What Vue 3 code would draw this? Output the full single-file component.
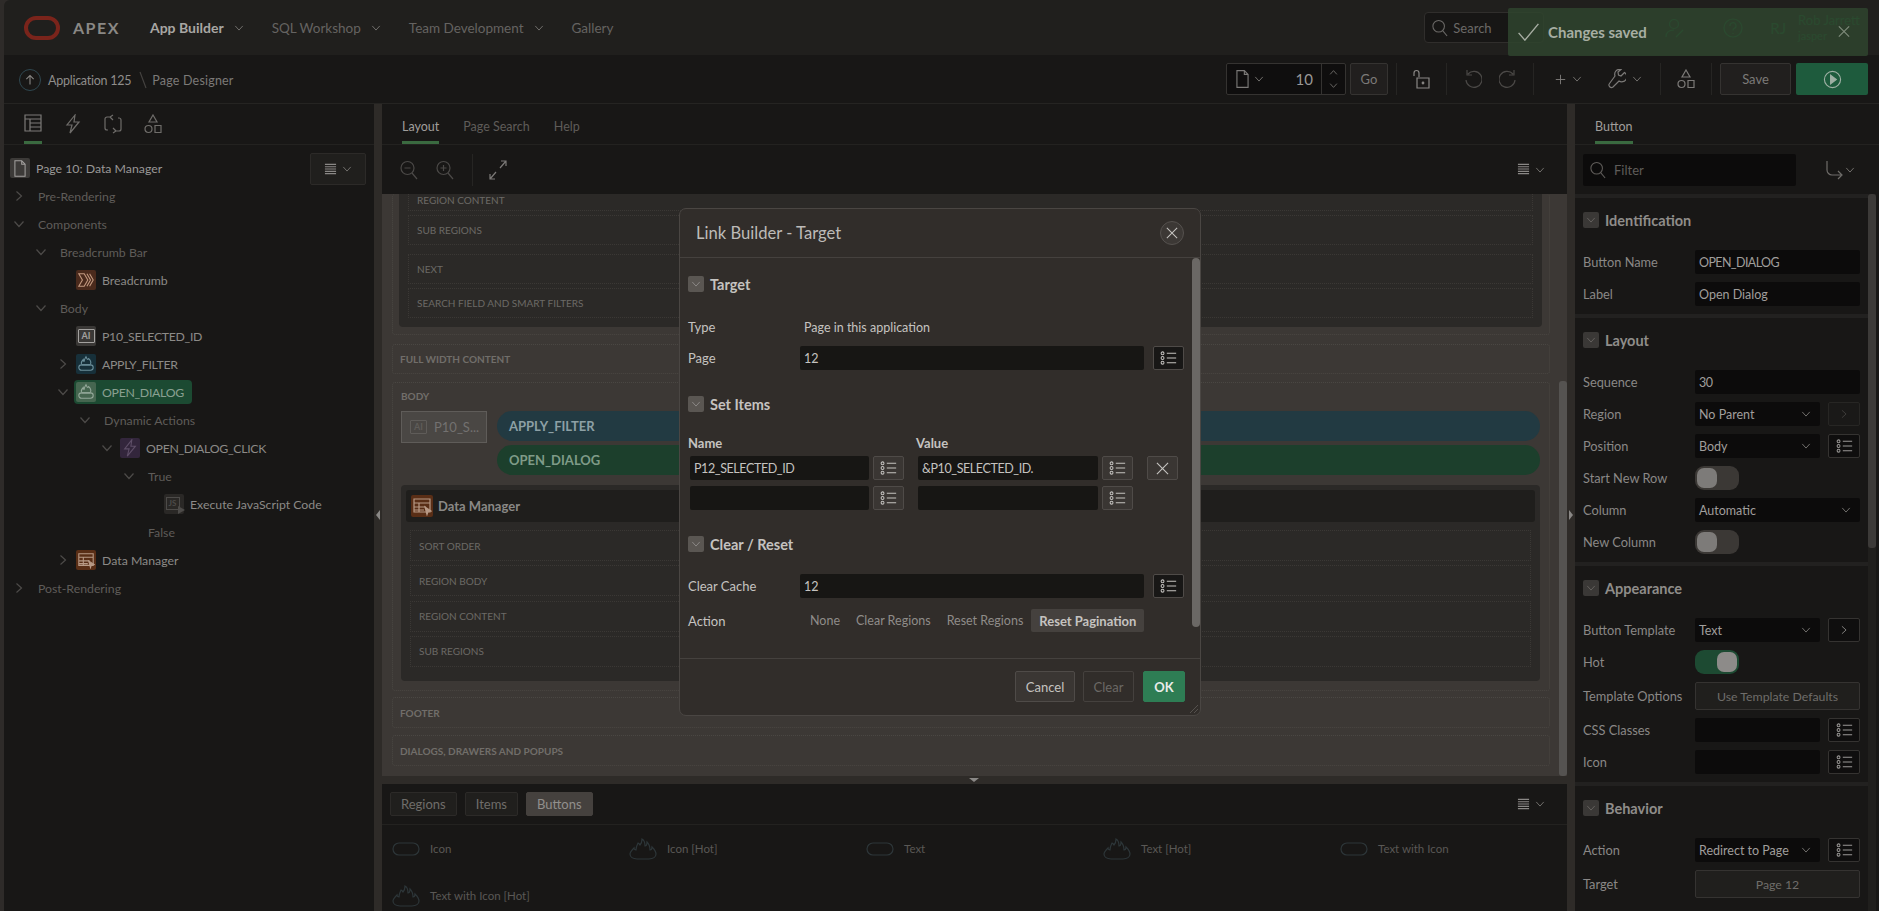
<template>
  <div class="app">
    <svg class="defs" aria-hidden="true">
      <symbol id="chev-d" viewBox="0 0 12 12"><path d="M1.5 3.5 6 8.5l4.5-5" /></symbol>
      <symbol id="chev-r" viewBox="0 0 12 12"><path d="M3.5 1.5 8.5 6l-5 4.5" /></symbol>
      <symbol id="chev-u" viewBox="0 0 12 12"><path d="M1.5 8.5 6 3.5l4.5 5" /></symbol>
      <symbol id="menu" viewBox="0 0 14 14"><path d="M1 1.5h12M1 4h12M1 6.5h12M1 9h12M1 11.5h12" /></symbol>
      <symbol id="lov" viewBox="0 0 20 16"><circle cx="3" cy="2.5" r="1.7" /><circle cx="3" cy="8" r="1.7" /><circle cx="3" cy="13.5" r="1.7" /><path d="M8 2.5h11M8 8h11M8 13.5h11" /></symbol>
      <symbol id="search" viewBox="0 0 18 20"><circle cx="7.5" cy="8" r="6.5" /><path d="m12 13 5 6" /></symbol>
      <symbol id="page" viewBox="0 0 14 20"><path d="M1 1h8l4 4v14H1zM9 1v4h4" /></symbol>
      <symbol id="tbl" viewBox="0 0 18 18"><path d="M1 1h16v16H1zM1 5h16M6 5v12M6 9h11M6 13h11" /></symbol>
      <symbol id="bolt" viewBox="0 0 14 20"><path d="M9 1 1 11h5l-2 8 9-11H8z" /></symbol>
      <symbol id="shared" viewBox="0 0 18 20"><path d="M7 3H3a2 2 0 0 0-2 2v9a2 2 0 0 0 2 2h1M11 17h4a2 2 0 0 0 2-2V6a2 2 0 0 0-2-2h-1M9 1 6 3l3 3M9 14l3 3-3 2" /></symbol>
      <symbol id="shapes" viewBox="0 0 18 20"><path d="M9 1l4 7H5z" /><circle cx="4.5" cy="15" r="3.5" /><path d="M11 11.5h6v7h-6z" /></symbol>
      <symbol id="lock" viewBox="0 0 18 20"><path d="M1 7V4a2.500 2.500 0 0 1 5 0v4" /><path d="M4 9h12v10H4z" /><circle cx="10" cy="14" r=".8" /></symbol>
      <symbol id="undo" viewBox="0 0 18 20"><path d="M4 5a8 8 0 1 1-2 6M3 1v5h5" /></symbol>
      <symbol id="redo" viewBox="0 0 18 20"><path d="M14 5a8 8 0 1 0 2 6M15 1v5h-5" /></symbol>
      <symbol id="plus" viewBox="0 0 14 14"><path d="M7 1v12M1 7h12" /></symbol>
      <symbol id="wrench" viewBox="0 0 18 20"><path d="M16.500 3.500 13 7l-2.500-1L10 3l3-2.500a5 5 0 0 0-6 6.500L1.500 14.500a2.500 2.500 0 0 0 3.500 3.500L11 12a5 5 0 0 0 5.500-8.500z" /></symbol>
      <symbol id="play" viewBox="0 0 20 20"><circle cx="10" cy="10" r="8.500" /><path class="solid" d="M8 5.500 14 10l-6 4.500z" /></symbol>
      <symbol id="check" viewBox="0 0 24 20"><path d="M1 11l7 8L23 1" /></symbol>
      <symbol id="x" viewBox="0 0 14 14"><path d="M1 1l12 12M13 1 1 13" /></symbol>
      <symbol id="expand" viewBox="0 0 18 20"><path d="M17 1l-6 7M12 1h5v5M1 19l6-7M6 19H1v-5" /></symbol>
      <symbol id="zoom-out" viewBox="0 0 18 20"><circle cx="7.500" cy="8" r="6.500" /><path d="m12 13 5 6M4.500 8h6" /></symbol>
      <symbol id="zoom-in" viewBox="0 0 18 20"><circle cx="7.500" cy="8" r="6.500" /><path d="m12 13 5 6M4.500 8h6M7.500 5v6" /></symbol>
      <symbol id="pill" viewBox="0 0 28 14"><rect x="1" y="1" width="26" height="12" rx="6" /></symbol>
      <symbol id="flame" viewBox="0 0 28 22"><path d="M8 21h12c4 0 7-2 7-5 0-3-2-5-4-7 0 2-1 3-2 3 0-3-1-6-3-8 0 3-1 4-2 4 0-3-1-6-3-7 0 3-1 5-2 6-1-1-1-2-2-2-1 2-2 4-2 7-1 0-2-1-2-2-2 2-4 4-4 6 0 3 3 5 7 5z" /></symbol>
      <symbol id="btn-ico" viewBox="0 0 20 20"><path d="M5 10c-1-2 0-3 2-5 0 1 0 2 1 2 0-2 1-3 2-5 1 2 1 3 2 3l1-1c2 2 3 4 2 6M5 11h10" /><rect x="2" y="11" width="16" height="6" rx="3" /></symbol>
      <symbol id="crumb" viewBox="0 0 20 20"><path d="M2 3h6l4 7-4 7H2l4-7zM11 3l4 7-4 7M14 3l4 7-4 7" /></symbol>
      <symbol id="dtable" viewBox="0 0 20 20"><path d="M2 3h16v13H2zM2 7h16M2 11h12M2 14h10M7 7v9" /><path class="solid" d="m13 11 6 4-3 .5-1 3z" /></symbol>
      <symbol id="goto" viewBox="0 0 18 20"><path d="M2 1v9a5 5 0 0 0 5 5h9M13 11l4 4-4 4" /></symbol>
      <symbol id="user" viewBox="0 0 20 20"><circle cx="9" cy="6" r="4.500" /><path d="M1 19c0-5 3-7 8-7M11 19l7-7" /></symbol>
      <symbol id="help" viewBox="0 0 20 20"><circle cx="10" cy="10" r="9" /><path d="M7 8a3 3 0 1 1 4 2.500c-1 .5-1 1-1 2M10 15v1" /></symbol>
    </svg>

    <header class="topbar">
      <div class="logo"></div>
      <span class="brand">APEX</span>
      <nav class="nav">
        <span v-for="item in navItems" :key="item.label" class="nav-item" :class="{ on: item.on }">
          {{ item.label }}
          <svg v-if="item.menu" class="i chev"><use href="#chev-d" /></svg>
        </span>
      </nav>
      <div class="top-right">
        <div class="top-search">
          <svg class="i s16"><use href="#search" /></svg>
          <span>Search</span>
        </div>
        <svg class="i ghost-ico"><use href="#user" /></svg>
        <svg class="i ghost-ico help"><use href="#help" /></svg>
        <span class="ghost-init">RJ</span>
        <div class="ghost-user">
          <span>Rob Jarrett</span>
          <span>jasper</span>
        </div>
      </div>
    </header>

    <div class="toolbar">
      <div class="crumbs">
        <span class="up-btn"><svg viewBox="0 0 22 22" class="i up-ico"><path d="M11 16V6M7 10l4-4 4 4" /></svg></span>
        <span class="crumb-a">Application 125</span>
        <svg viewBox="0 0 8 18" class="i slash"><path d="M1 1l6 16" /></svg>
        <span class="crumb-b">Page Designer</span>
      </div>
      <div class="tools">
        <div class="page-sel">
          <svg class="i page-ico"><use href="#page" /></svg>
          <svg class="i chev"><use href="#chev-d" /></svg>
          <span class="page-num">10</span>
          <span class="spin">
            <svg class="i spin-ico"><use href="#chev-u" /></svg>
            <svg class="i spin-ico"><use href="#chev-d" /></svg>
          </span>
        </div>
        <span class="tbtn go">Go</span>
        <span class="vsep first"></span>
        <span class="tgroup lock-g"><svg class="i t18 lock-ico"><use href="#lock" /></svg></span>
        <span class="vsep"></span>
        <span class="tgroup undo-g">
          <svg class="i t18 faint"><use href="#undo" /></svg>
          <svg class="i t18 faint"><use href="#redo" /></svg>
        </span>
        <span class="vsep"></span>
        <span class="tgroup add-g">
          <svg class="i plus-ico"><use href="#plus" /></svg>
          <svg class="i chev"><use href="#chev-d" /></svg>
          <svg class="i t18 wrench"><use href="#wrench" /></svg>
          <svg class="i chev"><use href="#chev-d" /></svg>
        </span>
        <span class="vsep"></span>
        <span class="tgroup shape-g"><svg class="i t18"><use href="#shapes" /></svg></span>
        <span class="vsep"></span>
        <span class="tbtn save">Save</span>
        <span class="run"><svg class="i s18"><use href="#play" /></svg></span>
      </div>
    </div>

    <main class="main">
      <aside class="lpanel">
        <div class="ltabs">
          <span v-for="(t, i) in leftTabs" :key="t" class="ltab" :class="{ on: i === 0 }">
            <svg class="i t18"><use :href="'#' + t" /></svg>
          </span>
        </div>
        <div class="tree-head">
          <span class="page-tile"><svg class="i page-small"><use href="#page" /></svg></span>
          <span class="tree-title">Page 10: Data Manager</span>
          <span class="menu-btn">
            <svg class="i s13"><use href="#menu" /></svg>
            <svg class="i chev"><use href="#chev-d" /></svg>
          </span>
        </div>
        <ul class="tree">
          <li v-for="n in treeRows" :key="n.label" class="tree-row" :style="{ paddingLeft: 9 + n.level * 22 + 'px' }">
            <svg v-if="n.open !== undefined" class="i toggle"><use :href="n.open ? '#chev-d' : '#chev-r'" /></svg>
            <span v-else class="toggle"></span>
            <span v-if="n.icon" class="node" :class="{ sel: n.sel }">
              <span class="tile" :class="n.tile">
                <span v-if="n.icon === 'ai'" class="ai">AI</span>
                <span v-else-if="n.icon === 'js'" class="js">JS<i></i></span>
                <svg v-else class="i tile-ico"><use :href="'#' + n.icon" /></svg>
              </span>
              <span class="node-label" :class="{ caps: isCaps(n.label) }">{{ n.label }}</span>
            </span>
            <span v-else class="group-label">{{ n.label }}</span>
          </li>
        </ul>
      </aside>

      <div class="splitter"><span class="tri left"></span></div>

      <section class="center">
        <div class="ptabs">
          <span v-for="(t, i) in centerTabs" :key="t" class="ptab" :class="{ on: i === 0 }">{{ t }}</span>
        </div>
        <div class="zoombar">
          <svg class="i t18 dim"><use href="#zoom-out" /></svg>
          <svg class="i t18 dim"><use href="#zoom-in" /></svg>
          <span class="zsep"></span>
          <svg class="i t18 bright"><use href="#expand" /></svg>
          <span class="zmenu">
            <svg class="i s13"><use href="#menu" /></svg>
            <svg class="i chev"><use href="#chev-d" /></svg>
          </span>
        </div>
        <div class="canvas">
          <div class="scroll">
            <div class="pos top-pos">
              <div class="region-box">
                <div class="slot cut">REGION CONTENT</div>
                <div v-for="r in topRows" :key="r" class="slot" :class="{ spaced: r === 'NEXT' }">{{ r }}</div>
              </div>
            </div>
            <div class="pos label-only">FULL WIDTH CONTENT</div>
            <div class="pos body-pos">
              <div class="pos-label">BODY</div>
              <div class="body-items">
                <div class="cv-item"><span class="ai cv-ai">AI</span><span>P10_S...</span></div>
                <div class="pills">
                  <div class="pill teal">APPLY_FILTER</div>
                  <div class="pill green">OPEN_DIALOG</div>
                </div>
              </div>
              <div class="region-box dm">
                <div class="dm-head">
                  <span class="dm-tile"><svg class="i dm-ico"><use href="#dtable" /></svg></span>
                  <span>Data Manager</span>
                </div>
                <div class="dm-slots">
                  <div v-for="r in dmRows" :key="r" class="slot">{{ r }}</div>
                </div>
              </div>
            </div>
            <div class="pos label-only footer-pos">FOOTER</div>
            <div class="pos label-only dialog-pos">DIALOGS, DRAWERS AND POPUPS</div>
          </div>
          <div class="track"><div class="thumb"></div></div>
        </div>
        <div class="hsplit"><span class="tri down"></span></div>
        <div class="gallery">
          <div class="gtabs">
            <span v-for="(t, i) in galleryTabs" :key="t" class="gtab" :class="{ on: i === 2 }">{{ t }}</span>
            <span class="zmenu">
              <svg class="i s13"><use href="#menu" /></svg>
              <svg class="i chev"><use href="#chev-d" /></svg>
            </span>
          </div>
          <div class="gitems">
            <div v-for="g in galleryItems" :key="g.label" class="gitem">
              <span class="gico">
                <svg class="i" :class="g.hot ? 'flame' : 'gpill'"><use :href="g.hot ? '#flame' : '#pill'" /></svg>
              </span>
              <span>{{ g.label }}</span>
            </div>
          </div>
        </div>
      </section>

      <div class="splitter"><span class="tri right"></span></div>

      <aside class="rpanel">
        <div class="ptabs"><span class="ptab on rtab">Button</span></div>
        <div class="filter-row">
          <div class="filter">
            <svg class="i s16"><use href="#search" /></svg>
            <span>Filter</span>
          </div>
          <span class="goto">
            <svg class="i t18"><use href="#goto" /></svg>
            <svg class="i chev"><use href="#chev-d" /></svg>
          </span>
        </div>
        <div class="props">
          <div class="prop-groups">
            <section v-for="g in propGroups" :key="g.title" class="pgroup">
              <h3 class="phead">
                <span class="cbox"><svg class="i cbox-ico"><use href="#chev-d" /></svg></span>
                {{ g.title }}
              </h3>
              <div class="pfields">
                <div v-for="f in g.fields" :key="f.label" class="pfield">
                  <span class="plabel">{{ f.label }}</span>
                  <div class="pctrl">
                    <span v-if="f.kind === 'toggle'" class="toggle-sw" :class="{ on: f.on }"><i></i></span>
                    <span v-else-if="f.kind === 'button'" class="pbutton">{{ f.value }}</span>
                    <span v-else class="pinput">
                      <span :class="{ caps: isCaps(f.value) }">{{ f.value }}</span>
                      <svg v-if="f.kind === 'select'" class="i chev"><use href="#chev-d" /></svg>
                    </span>
                    <span v-if="f.side" class="pside" :class="{ off: f.side === 'off' }">
                      <svg v-if="f.side === 'lov'" class="i lov-ico"><use href="#lov" /></svg>
                      <svg v-else class="i chev"><use href="#chev-r" /></svg>
                    </span>
                  </div>
                </div>
              </div>
            </section>
          </div>
          <div class="ptrack"><div class="pthumb"></div></div>
        </div>
      </aside>
    </main>

    <div class="toast">
      <svg class="i check"><use href="#check" /></svg>
      <span>Changes saved</span>
      <svg class="i toast-x"><use href="#x" /></svg>
    </div>

    <div class="modal">
      <div class="m-head">
        <span>Link Builder - Target</span>
        <span class="m-close"><svg class="i s13"><use href="#x" /></svg></span>
      </div>
      <div class="m-body">
        <div class="m-content">
          <h3 class="m-sec">
            <span class="cbox"><svg class="i cbox-ico"><use href="#chev-d" /></svg></span>
            Target
          </h3>
          <div class="m-row type-row">
            <span class="m-label">Type</span>
            <span class="m-static">Page in this application</span>
          </div>
          <div class="m-row">
            <span class="m-label">Page</span>
            <span class="m-input wide">12</span>
            <span class="m-lov dark"><svg class="i lov-ico"><use href="#lov" /></svg></span>
          </div>

          <h3 class="m-sec next">
            <span class="cbox"><svg class="i cbox-ico"><use href="#chev-d" /></svg></span>
            Set Items
          </h3>
          <div class="item-heads"><b>Name</b><b>Value</b></div>
          <div v-for="(r, i) in setItems" :key="i" class="item-row">
            <span class="m-input name">{{ r.name }}</span>
            <span class="m-lov"><svg class="i lov-ico"><use href="#lov" /></svg></span>
            <span class="m-input value">{{ r.value }}</span>
            <span class="m-lov"><svg class="i lov-ico"><use href="#lov" /></svg></span>
            <span v-if="r.name" class="m-lov del"><svg class="i s13"><use href="#x" /></svg></span>
          </div>

          <h3 class="m-sec next">
            <span class="cbox"><svg class="i cbox-ico"><use href="#chev-d" /></svg></span>
            Clear / Reset
          </h3>
          <div class="m-row cache-row">
            <span class="m-label">Clear Cache</span>
            <span class="m-input wide">12</span>
            <span class="m-lov dark"><svg class="i lov-ico"><use href="#lov" /></svg></span>
          </div>
          <div class="m-row action-row">
            <span class="m-label">Action</span>
            <div class="options">
              <span v-for="(o, i) in actionOptions" :key="o" class="option" :class="{ on: i === 3 }">{{ o }}</span>
            </div>
          </div>
        </div>
        <div class="m-scroll"></div>
      </div>
      <div class="m-foot">
        <span class="m-btn">Cancel</span>
        <span class="m-btn muted">Clear</span>
        <span class="m-btn ok">OK</span>
      </div>
      <svg viewBox="0 0 8 8" class="grip"><path d="M0 8l8-8M4 8l4-4" /></svg>
    </div>
  </div>
</template>

<script setup>
const navItems = [
  { label: 'App Builder', menu: true, on: true },
  { label: 'SQL Workshop', menu: true },
  { label: 'Team Development', menu: true },
  { label: 'Gallery' }
]

const leftTabs = ['tbl', 'bolt', 'shared', 'shapes']
const centerTabs = ['Layout', 'Page Search', 'Help']
const galleryTabs = ['Regions', 'Items', 'Buttons']

// level drives the indent, open is undefined for rows with no toggle
const treeRows = [
  { label: 'Pre-Rendering', level: 0, open: false },
  { label: 'Components', level: 0, open: true },
  { label: 'Breadcrumb Bar', level: 1, open: true },
  { label: 'Breadcrumb', level: 2, icon: 'crumb', tile: 'rust' },
  { label: 'Body', level: 1, open: true },
  { label: 'P10_SELECTED_ID', level: 2, icon: 'ai', tile: 'grey' },
  { label: 'APPLY_FILTER', level: 2, open: false, icon: 'btn-ico', tile: 'teal' },
  { label: 'OPEN_DIALOG', level: 2, open: true, icon: 'btn-ico', tile: 'sage', sel: true },
  { label: 'Dynamic Actions', level: 3, open: true },
  { label: 'OPEN_DIALOG_CLICK', level: 4, open: true, icon: 'bolt', tile: 'purple' },
  { label: 'True', level: 5, open: true },
  { label: 'Execute JavaScript Code', level: 6, icon: 'js', tile: 'dark' },
  { label: 'False', level: 5 },
  { label: 'Data Manager', level: 2, open: false, icon: 'dtable', tile: 'orange' },
  { label: 'Post-Rendering', level: 0, open: false }
]

const topRows = ['SUB REGIONS', 'NEXT', 'SEARCH FIELD AND SMART FILTERS']
const dmRows = ['SORT ORDER', 'REGION BODY', 'REGION CONTENT', 'SUB REGIONS']

const galleryItems = [
  { label: 'Icon' },
  { label: 'Icon [Hot]', hot: true },
  { label: 'Text' },
  { label: 'Text [Hot]', hot: true },
  { label: 'Text with Icon' },
  { label: 'Text with Icon [Hot]', hot: true }
]

const propGroups = [
  {
    title: 'Identification',
    fields: [
      { label: 'Button Name', value: 'OPEN_DIALOG' },
      { label: 'Label', value: 'Open Dialog' }
    ]
  },
  {
    title: 'Layout',
    fields: [
      { label: 'Sequence', value: '30' },
      { label: 'Region', value: 'No Parent', kind: 'select', side: 'off' },
      { label: 'Position', value: 'Body', kind: 'select', side: 'lov' },
      { label: 'Start New Row', kind: 'toggle' },
      { label: 'Column', value: 'Automatic', kind: 'select' },
      { label: 'New Column', kind: 'toggle' }
    ]
  },
  {
    title: 'Appearance',
    fields: [
      { label: 'Button Template', value: 'Text', kind: 'select', side: 'next' },
      { label: 'Hot', kind: 'toggle', on: true },
      { label: 'Template Options', value: 'Use Template Defaults', kind: 'button' },
      { label: 'CSS Classes', value: '', side: 'lov' },
      { label: 'Icon', value: '', side: 'lov' }
    ]
  },
  {
    title: 'Behavior',
    fields: [
      { label: 'Action', value: 'Redirect to Page', kind: 'select', side: 'lov' },
      { label: 'Target', value: 'Page 12', kind: 'button' }
    ]
  }
]

const setItems = [
  { name: 'P12_SELECTED_ID', value: '&P10_SELECTED_ID.' },
  { name: '', value: '' }
]

const actionOptions = ['None', 'Clear Regions', 'Reset Regions', 'Reset Pagination']

// item names in capitals run tighter than the rest of the text
function isCaps(text) {
  return /^[A-Z0-9_]+$/.test(text || '')
}
</script>

<style>
html, body { background: #181716; }
</style>

<style scoped>
* { box-sizing: border-box; }
ul, h3 { margin: 0; padding: 0; list-style: none; font: inherit; }

.defs { position: absolute; width: 0; height: 0; }
.i { display: block; flex: none; fill: none; stroke: currentColor; stroke-width: 1.2; }
.chev { width: 10px; height: 10px; color: #6f6d6a; }
.s13 { width: 13px; height: 13px; }
.s16 { width: 16px; height: 18px; }
.s18 { width: 19px; height: 19px; }
.t18 { width: 18px; height: 20px; }

.app {
  position: relative;
  width: 1879px;
  height: 911px;
  padding-left: 4px;
  overflow: hidden;
  display: flex;
  flex-direction: column;
  background: #2e2b29;
  color: #8a8886;
  font-family: Lato, "Liberation Sans", sans-serif;
  font-size: 13px;
}

/* top header */
.topbar { height: 55px; flex: none; display: flex; align-items: center; background: #201f1d; padding-left: 20px; border-top-left-radius: 6px; }
.logo { width: 36px; height: 24px; border: 4px solid #7a241b; border-radius: 12px; }
.brand { margin-left: 13px; font-size: 16px; font-weight: 700; letter-spacing: 1.5px; color: #8a8885; }
.nav { margin-left: 30px; display: flex; gap: 28px; }
.nav-item { display: flex; align-items: center; gap: 10px; font-size: 13.5px; color: #656361; }
.nav-item.on { color: #a8a6a3; font-weight: 700; font-size: 14px; }
.top-right { margin-left: auto; display: flex; align-items: center; padding-right: 19px; }
.top-search { width: 120px; height: 31px; display: flex; align-items: center; gap: 5px; padding-left: 7px; background: #171615; border: 1px solid #302e2c; border-radius: 4px; color: #6b6967; margin-right: 121px; }
.ghost-ico { width: 20px; height: 20px; color: #0e6a38; }
.ghost-ico.help { margin-left: 38px; }
.ghost-init { margin-left: 27px; font-size: 15px; color: #0e6a38; }
.ghost-user { margin-left: 12px; display: flex; flex-direction: column; color: #0e6a38; line-height: 16px; }
.ghost-user span + span { font-size: 11px; }

/* page toolbar */
.toolbar { height: 49px; flex: none; display: flex; align-items: center; justify-content: space-between; background: #181716; border-bottom: 1px solid #252422; }
.crumbs { display: flex; align-items: center; padding: 2px 0 0 15px; font-size: 12.5px; letter-spacing: -.25px; }
.up-btn { width: 22px; height: 22px; border: 1px solid #2f4750; border-radius: 50%; display: flex; }
.up-ico { width: 20px; height: 20px; color: #8a8886; }
.crumb-a { margin-left: 7px; color: #8f8d8b; }
.slash { width: 8px; height: 18px; margin: 0 5px 0 8px; color: #454341; }
.crumb-b { color: #7c7a78; letter-spacing: .2px; }
.tools { display: flex; align-items: center; padding-right: 11px; }
.page-sel { width: 120px; height: 32px; display: flex; align-items: center; padding-left: 9px; background: #0f0e0e; border: 1px solid #353331; border-radius: 2px; }
.page-ico { width: 13px; height: 20px; color: #7c7a78; margin-right: 5px; }
.page-num { margin-left: auto; font-size: 15px; color: #9a9896; padding-right: 8px; }
.spin { width: 24px; height: 100%; border-left: 1px solid #353331; display: flex; flex-direction: column; align-items: center; justify-content: center; gap: 4px; }
.spin-ico { width: 9px; height: 9px; color: #6f6d6a; }
.tbtn { height: 32px; display: flex; align-items: center; justify-content: center; background: #211f1e; border: 1px solid #353331; border-radius: 2px; color: #7c7a78; }
.go { width: 38px; margin-left: 4px; }
.vsep { width: 1px; height: 32px; background: #262523; }
.vsep.first { margin-left: 8px; }
.tgroup { display: flex; align-items: center; justify-content: center; color: #7c7a78; }
.lock-g { width: 49px; }
.lock-ico { color: #8a8886; }
.undo-g { width: 86px; gap: 17px; }
.faint { color: #4b4947; }
.add-g { width: 126px; justify-content: flex-start; padding-left: 21px; gap: 5px; }
.plus-ico { width: 11px; height: 11px; }
.add-g .chev { margin-left: 1px; }
.wrench { margin-left: 21px; }
.shape-g { width: 50px; }
.save { width: 71px; margin-left: 8px; }
.run { width: 72px; height: 32px; margin-left: 5px; background: #1e5b3d; border-radius: 2px; display: flex; align-items: center; justify-content: center; color: #9dafa3; }
.solid { fill: currentColor; }

/* main layout */
.main { flex: 1; min-height: 0; display: flex; }
.lpanel { width: 370px; flex: none; background: #181716; }
.splitter { width: 8px; flex: none; position: relative; background: #2e2b28; }
.tri { position: absolute; width: 0; height: 0; }
.tri.left { left: 2px; top: 406px; border: 5px solid transparent; border-left: 0; border-right: 4px solid #8a8886; }
.tri.right { left: 2px; top: 406px; border: 5px solid transparent; border-right: 0; border-left: 4px solid #8a8886; }
.tri.down { left: 587px; top: 2px; border: 5px solid transparent; border-bottom: 0; border-top: 4px solid #8a8886; }

/* left tree */
.ltabs { height: 41px; display: flex; gap: 22px; padding-left: 20px; border-bottom: 1px solid #232220; }
.ltab { width: 18px; height: 40px; display: flex; align-items: center; justify-content: center; color: #6f6d6a; }
.ltab.on { border-bottom: 3px solid #3a6a40; color: #7c7a78; }
.tree-head { height: 37px; display: flex; align-items: center; padding: 9px 8px 0 6px; font-size: 12.3px; }
.page-tile { width: 20px; height: 20px; background: #3c3a38; border-radius: 2px; display: flex; align-items: center; justify-content: center; color: #a3a19f; }
.page-small { width: 12px; height: 17px; }
.tree-title { margin-left: 6px; color: #9a9896; }
.menu-btn { margin: 2px 0 0 auto; width: 56px; height: 32px; flex: none; display: flex; align-items: center; justify-content: center; gap: 5px; background: #201f1d; border: 1px solid #2c2a28; border-radius: 2px; color: #8a8886; }
.tree-row { height: 28px; display: flex; align-items: center; color: #5f5c59; font-size: 12.3px; }
.toggle { width: 12px; height: 12px; flex: none; color: #4d4b49; }
.group-label { margin-left: 13px; }
.node { display: flex; align-items: center; margin-left: 5px; padding: 2px 8px 2px 2px; border-radius: 4px; }
.node.sel { background: #1c4a32; }
.tile { width: 20px; height: 20px; border-radius: 2px; display: flex; align-items: center; justify-content: center; }
.tile-ico { width: 18px; height: 18px; }
.node-label { margin-left: 6px; color: #8c8a87; }
.node-label.caps { letter-spacing: -.3px; }
.node.sel .node-label { color: #8aa091; }
.tile.rust { background: #4a2a1c; color: #c49a80; }
.tile.grey { background: #3a3836; color: #a3a19f; }
.tile.teal { background: #17303a; color: #6c8f9b; }
.tile.sage { background: #466650; color: #93a899; }
.tile.purple { background: #33263c; color: #5f4f68; }
.tile.dark { background: #2a2826; color: #4d4b49; }
.tile.orange { background: #592e16; color: #b89a86; }
.ai { border: 1px solid currentColor; font-size: 9px; font-weight: 700; line-height: 12px; width: 17px; height: 14px; text-align: center; border-radius: 1px; }
.js { position: relative; font-size: 8px; font-weight: 700; border: 1px solid currentColor; width: 14px; height: 13px; line-height: 11px; text-align: center; margin: -2px 3px 0 0; }
.js i { position: absolute; right: -6px; bottom: -5px; border: 4px solid transparent; border-right: 0; border-left: 7px solid currentColor; }

/* center column */
.center { width: 1185px; flex: none; display: flex; flex-direction: column; background: #181716; }
.ptabs { height: 41px; flex: none; display: flex; gap: 24px; padding-left: 20px; border-bottom: 1px solid #232220; }
.ptab { height: 40px; display: flex; align-items: center; padding-top: 4px; color: #5f5c59; font-size: 12.5px; }
.ptab.on { border-bottom: 3px solid #3a6a40; color: #a09e9b; padding-top: 7px; }
.zoombar { height: 49px; flex: none; display: flex; align-items: center; padding: 0 22px 0 18px; color: #4b4947; }
.zoombar .dim { margin-right: 18px; }
.zsep { width: 1px; height: 32px; background: #262523; margin-right: 16px; }
.bright { color: #7c7a78; }
.zmenu { margin-left: auto; display: flex; align-items: center; gap: 5px; color: #8a8886; }
.canvas { flex: 1; min-height: 0; display: flex; background: #3c3835; overflow: hidden; }
.scroll { flex: 1; min-width: 0; padding: 0 9px 0 10px; color: #716e6a; font-weight: 700; font-size: 10px; }
.track { width: 8px; flex: none; padding-top: 187px; }
.thumb { height: 395px; background: #555351; border-radius: 3px; }
.pos { border: 1px dotted #4a4743; border-radius: 3px; padding: 0 7px; }
.top-pos { padding: 0 7px 7px 6px; border-top: 0; }
.region-box { background: #2b2927; border-radius: 4px; padding: 0 9px 9px; font-weight: 400; }
.top-pos .region-box { display: flex; flex-direction: column; gap: 4px; border-radius: 0 0 4px 4px; }
.slot { height: 30px; display: flex; align-items: center; padding-left: 8px; border: 1px dotted #3b3835; color: #6b6966; }
.slot.cut { height: 17px; align-items: flex-start; line-height: 12px; border-top: 0; }
.slot.spaced { margin-top: 5px; }
.label-only { height: 30px; display: flex; align-items: center; margin-top: 9px; }
.body-pos { margin-top: 8px; height: 309px; padding: 6px 9px 0 8px; }
.pos-label { line-height: 14px; }
.body-items { display: flex; gap: 10px; margin-top: 8px; }
.cv-item { width: 86px; height: 32px; flex: none; display: flex; align-items: center; gap: 7px; padding-left: 8px; background: #4a4744; border: 1px solid #5f5c59; color: #737170; font-size: 13px; font-weight: 400; }
.cv-ai { color: #5f5c59; }
.pills { flex: 1; display: flex; flex-direction: column; gap: 4px; }
.pill { height: 30px; display: flex; align-items: center; padding-left: 12px; border-radius: 15px; font-size: 13px; }
.pill.teal { background: #223a42; color: #8da0a5; }
.pill.green { background: #1c3f2c; color: #7f9b88; }
.dm { margin-top: 10px; height: 196px; padding: 5px 5px 0; }
.dm-head { height: 32px; display: flex; align-items: center; gap: 5px; padding-left: 5px; background: #1f1e1c; border-radius: 3px; color: #8a8986; font-size: 13px; font-weight: 700; }
.dm-tile { width: 22px; height: 22px; background: #592e16; border-radius: 2px; display: flex; align-items: center; justify-content: center; color: #b89a86; }
.dm-ico { width: 20px; height: 20px; }
.dm-slots { display: flex; flex-direction: column; gap: 4.33px; margin: 8px 4px 0; }
.dm-slots .slot { height: 31px; }
.footer-pos { margin-top: 6px; height: 31px; }
.dialog-pos { margin-top: 7px; height: 31px; }
.hsplit { height: 8px; flex: none; position: relative; background: #2e2b28; }

/* component gallery */
.gallery { height: 127px; flex: none; font-size: 11.5px; color: #5a5855; }
.gtabs { height: 41px; display: flex; align-items: flex-start; gap: 8px; padding: 8px 22px 0 8px; border-bottom: 1px solid #232220; }
.gtab { height: 24px; padding: 0 10px; display: flex; align-items: center; border: 1px solid #2c2a28; border-radius: 2px; background: #201f1d; color: #6f6d6a; font-size: 13px; }
.gtab.on { background: #45413e; border-color: #45413e; color: #918f8c; }
.gtabs .zmenu { align-self: center; margin-bottom: 8px; }
.gitems { display: grid; grid-template-columns: repeat(5, 237px); grid-auto-rows: 47px; padding-left: 10px; }
.gitem { display: flex; align-items: center; gap: 10px; }
.gico { width: 28px; height: 24px; display: flex; align-items: center; }
.flame { width: 28px; height: 22px; color: #2d3639; }
.gpill { width: 28px; height: 14px; color: #2d3639; }

/* property editor */
.rpanel { flex: 1; min-width: 0; display: flex; flex-direction: column; background: #181716; }
.rtab { margin: 0; }
.filter-row { height: 49px; flex: none; display: flex; align-items: center; padding-left: 8px; }
.filter { width: 213px; height: 32px; display: flex; align-items: center; gap: 8px; padding-left: 7px; background: #0c0b0b; border-radius: 2px; color: #5f5c59; }
.goto { margin-left: 29px; display: flex; align-items: center; gap: 2px; color: #6f6d6a; }
.props { flex: 1; min-height: 0; display: flex; overflow: hidden; }
.prop-groups { width: 293px; flex: none; }
.pgroup { border-top: 4px solid #222120; padding: 14px 8px 8px; }
.phead { display: flex; align-items: center; gap: 6px; height: 16px; font-size: 14.5px; font-weight: 700; color: #8f8d8a; }
.cbox { width: 16px; height: 16px; border-radius: 2px; background: #3a3836; display: flex; align-items: center; justify-content: center; color: #63605d; }
.cbox-ico { width: 10px; height: 10px; }
.pfields { margin-top: 22px; display: flex; flex-direction: column; gap: 8px; }
.pfield { display: grid; grid-template-columns: 112px 165px; align-items: center; }
.plabel { color: #8a8886; font-size: 12.8px; }
.pctrl { display: flex; gap: 8px; min-height: 24px; }
.pinput { flex: 1; height: 24px; display: flex; align-items: center; justify-content: space-between; padding: 0 9px 0 4px; background: #0c0b0b; border-radius: 2px; color: #a09e9c; font-size: 12.5px; }
.pinput .caps { letter-spacing: -.6px; }
.pside { width: 32px; height: 24px; flex: none; display: flex; align-items: center; justify-content: center; background: #0f0e0e; border: 1px solid #353331; border-radius: 2px; color: #9a9896; }
.pside.off { background: #1a1918; border-color: #272624; }
.pside .chev { color: #7c7a78; }
.pside.off .chev { color: #3d3b39; }
.lov-ico { width: 17px; height: 14px; }
.pbutton { flex: 1; height: 28px; display: flex; align-items: center; justify-content: center; background: #201f1d; border: 1px solid #353331; border-radius: 2px; color: #6f6d6a; font-size: 12.3px; }
.toggle-sw { width: 44px; height: 24px; padding: 2px; background: #3b3835; border-radius: 9px; }
.toggle-sw i { display: block; width: 20px; height: 20px; border-radius: 7px; background: #7d7b79; }
.toggle-sw.on { background: #1d4a32; padding-left: 22px; }
.toggle-sw.on i { background: #8d8b89; }
.ptrack { width: 8px; flex: none; background: #201f1d; }
.pthumb { height: 354px; background: #3c3a38; border-radius: 3px; }

/* success message */
.toast { position: absolute; left: 1508px; top: 8px; width: 360px; height: 48px; display: flex; align-items: center; gap: 8px; padding-left: 9px; background: rgba(47, 68, 46, .85); border-radius: 2px; color: #a7aea3; font-size: 15px; font-weight: 700; }
.check { width: 23px; height: 18px; color: #a7aea3; stroke-width: 1.6; }
.toast-x { position: absolute; right: 18px; top: 17px; width: 12px; height: 13px; color: #7d8a7a; stroke-width: 1.4; }

/* link builder dialog */
.modal { position: absolute; left: 679px; top: 208px; width: 522px; height: 508px; display: flex; flex-direction: column; background: #312d2a; border: 1px solid #4a4643; border-radius: 7px; color: #c5c3c0; }
.m-head { height: 49px; flex: none; display: flex; align-items: center; justify-content: space-between; padding: 0 16px; border-bottom: 1px solid #45413e; font-size: 16.6px; color: #bdbbb8; }
.m-close { width: 24px; height: 24px; border: 1px solid #55514e; background: #3c3835; border-radius: 50%; display: flex; align-items: center; justify-content: center; color: #c5c3c0; }
.m-close .s13 { width: 12px; height: 12px; }
.m-body { flex: 1; min-height: 0; display: flex; justify-content: space-between; }
.m-content { padding: 18px 0 0 8px; }
.m-scroll { width: 8px; height: 369px; background: #6b6865; border-radius: 4px; }
.m-sec { display: flex; align-items: center; gap: 6px; height: 16px; font-size: 14.5px; font-weight: 700; color: #c5c3c0; }
.m-sec .cbox { background: #5a5652; color: #8a8785; }
.m-sec.next { margin-top: 26px; }
.m-row { display: flex; align-items: center; gap: 9px; height: 24px; margin-top: 7px; }
.type-row { margin-top: 23px; }
.m-label { width: 103px; color: #c5c3c0; }
.m-static { margin-left: 4px; color: #c5c3c0; font-size: 12.5px; }
.m-input { height: 24px; display: flex; align-items: center; padding-left: 4px; background: #171614; border-radius: 2px; color: #c5c3c0; flex: none; font-size: 12.5px; }
.m-input.wide { width: 344px; }
.m-input.name { width: 179px; letter-spacing: -.4px; }
.m-input.value { width: 180px; margin-left: 10px; letter-spacing: -.4px; }
.m-lov { width: 31px; height: 24px; flex: none; display: flex; align-items: center; justify-content: center; background: #3a3633; border: 1px solid #4f4b48; border-radius: 2px; color: #c5c3c0; }
.m-lov.dark { background: #181716; }
.m-lov.del { margin-left: 10px; }
.item-heads { display: flex; margin-top: 23px; height: 16px; align-items: center; }
.item-heads b { width: 228px; color: #c5c3c0; }
.item-row { display: flex; gap: 4px; height: 24px; margin: 5px 0 0 2px; }
.item-row + .item-row { margin-top: 6px; }
.cache-row { margin-top: 22px; }
.action-row { margin-top: 11px; height: 23px; }
.options { display: flex; margin-left: 2px; }
.option { height: 23px; padding: 0 8px; display: flex; align-items: center; color: #8f8c89; font-size: 12.5px; }
.option.on { background: #45413e; border-radius: 2px; color: #c5c3c0; font-weight: 700; font-size: 13px; }
.m-foot { height: 57px; flex: none; display: flex; justify-content: flex-end; gap: 8px; padding: 12px 15px 0 0; border-top: 1px solid #45413e; }
.m-btn { height: 31px; width: 60px; display: flex; align-items: center; justify-content: center; background: #3a3633; border: 1px solid #4f4b48; border-radius: 2px; color: #c5c3c0; }
.m-btn.muted { width: 51px; margin-right: 1px; background: #312d2a; color: #6b6865; border-color: #45413e; }
.m-btn.ok { width: 42px; background: #2e7d54; border-color: #2e7d54; color: #e8ece9; font-weight: 700; }
.grip { position: absolute; right: 2px; bottom: 2px; width: 8px; height: 8px; fill: none; stroke: #55514e; }
</style>
